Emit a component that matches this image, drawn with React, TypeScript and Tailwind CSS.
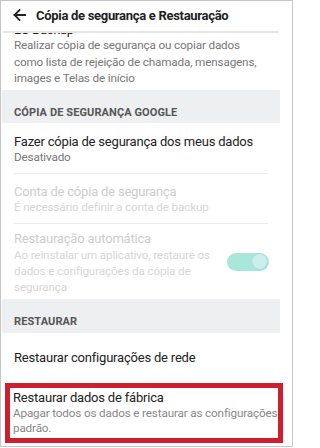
import React from "react";

export default function App() {
  const title = "text-[13px] leading-[16px] tracking-[-0.2px] whitespace-nowrap";
  const desc = "text-[11.7px] tracking-[-0.15px] whitespace-nowrap";
  return (
    <div className="w-[295px] h-[448px] bg-white overflow-hidden font-['Roboto',sans-serif]">
      <div className="w-[293px] h-[447px] border border-[#c6c6c6] bg-white overflow-hidden">
        {/* Header */}
        <div className="bg-white h-[32px] w-[278px]">
          <div className="h-[30px] flex items-center pl-[12px]">
            <svg width="13" height="12" viewBox="0 0 13 12" className="mt-[-3px]">
              <path d="M12.5 6H1.5M6.5 1L1.5 6L6.5 11" fill="none" stroke="#222" strokeWidth="1.8" strokeLinecap="square" />
            </svg>
            <span className="ml-[10px] text-[13px] font-bold text-[#222] leading-[16px] tracking-[-0.3px] whitespace-nowrap">
              Cópia de segurança e Restauração
            </span>
          </div>
          <div className="h-[2px] ml-[2px] w-[276px] bg-[#e6e6e6]" />
        </div>

        <div className="ml-[1px] w-[278px]">
          {/* LG Backup (scrolled partly under header) */}
          <div className="pl-[12px] pb-[3px]">
            <div className="h-[4px] overflow-hidden">
              <div className={`${title} text-[#222] -mt-[11px]`}>LG Backup</div>
            </div>
            <div className={`${desc} leading-[16.5px] text-[#777]`}>
              Realizar cópia de segurança ou copiar dados
              <br />
              como lista de rejeição de chamada, mensagens,
              <br />
              images e Telas de início
            </div>
          </div>

          {/* Section Google */}
          <div className="h-[33px] bg-[#eeeff1] flex items-end pb-[4px] pl-[12px]">
            <span className="text-[11px] leading-[12px] font-bold text-[#555] tracking-[0.1px]">CÓPIA DE SEGURANÇA GOOGLE</span>
          </div>

          <div className="pl-[12px] pt-[11px] pb-[8px]">
            <div className={`${title} text-[#222]`}>Fazer cópia de segurança dos meus dados</div>
            <div className={`${desc} leading-[15px] text-[#777]`}>Desativado</div>
          </div>
          <div className="ml-[12px] w-[254px] h-px bg-[#ececec]" />

          <div className="pl-[12px] pt-[10px] pb-[8px]">
            <div className={`${title} text-[#cdcdcd]`}>Conta de cópia de segurança</div>
            <div className={`${desc} leading-[15px] text-[#d6d6d6]`}>É necessário definir a conta de backup</div>
          </div>
          <div className="ml-[12px] w-[254px] h-px bg-[#ececec]" />

          <div className="pl-[12px] pt-[7px] pb-[4px] flex">
            <div className="flex-1">
              <div className={`${title} text-[#cdcdcd]`}>Restauração automática</div>
              <div className={`${desc} leading-[16px] text-[#d6d6d6]`}>
                Ao reinstalar um aplicativo, restaure os
                <br />
                dados e configurações da cópia de
                <br />
                segurança
              </div>
            </div>
            <div className="mr-[11px] mt-[22px] w-[42px] h-[18px] rounded-full bg-[#a9e6dc] flex items-center justify-end pr-[2px]">
              <div className="w-[15px] h-[15px] rounded-full bg-[#c9f0ea] shadow-[0_0_1px_rgba(0,0,0,0.15)]" />
            </div>
          </div>

          {/* Section Restaurar */}
          <div className="h-[34px] bg-[#eeeff1] flex items-end pb-[5px] pl-[12px]">
            <span className="text-[11px] leading-[12px] font-bold text-[#555] tracking-[0.1px]">RESTAURAR</span>
          </div>

          <div className="pl-[12px] pt-[17px] pb-[17px]">
            <div className={`${title} text-[#222]`}>Restaurar configurações de rede</div>
          </div>

          <div className="ml-[3px] w-[278px] h-[60px] border-[5px] border-[#cf1f2e] pl-[3px] pt-[2px]">
            <div className={`${title} text-[#222]`}>Restaurar dados de fábrica</div>
            <div className={`${desc} leading-[15px] text-[#888]`}>
              Apagar todos os dados e restaurar as configurações
              <br />
              padrão.
            </div>
          </div>
        </div>
      </div>
    </div>
  );
}
